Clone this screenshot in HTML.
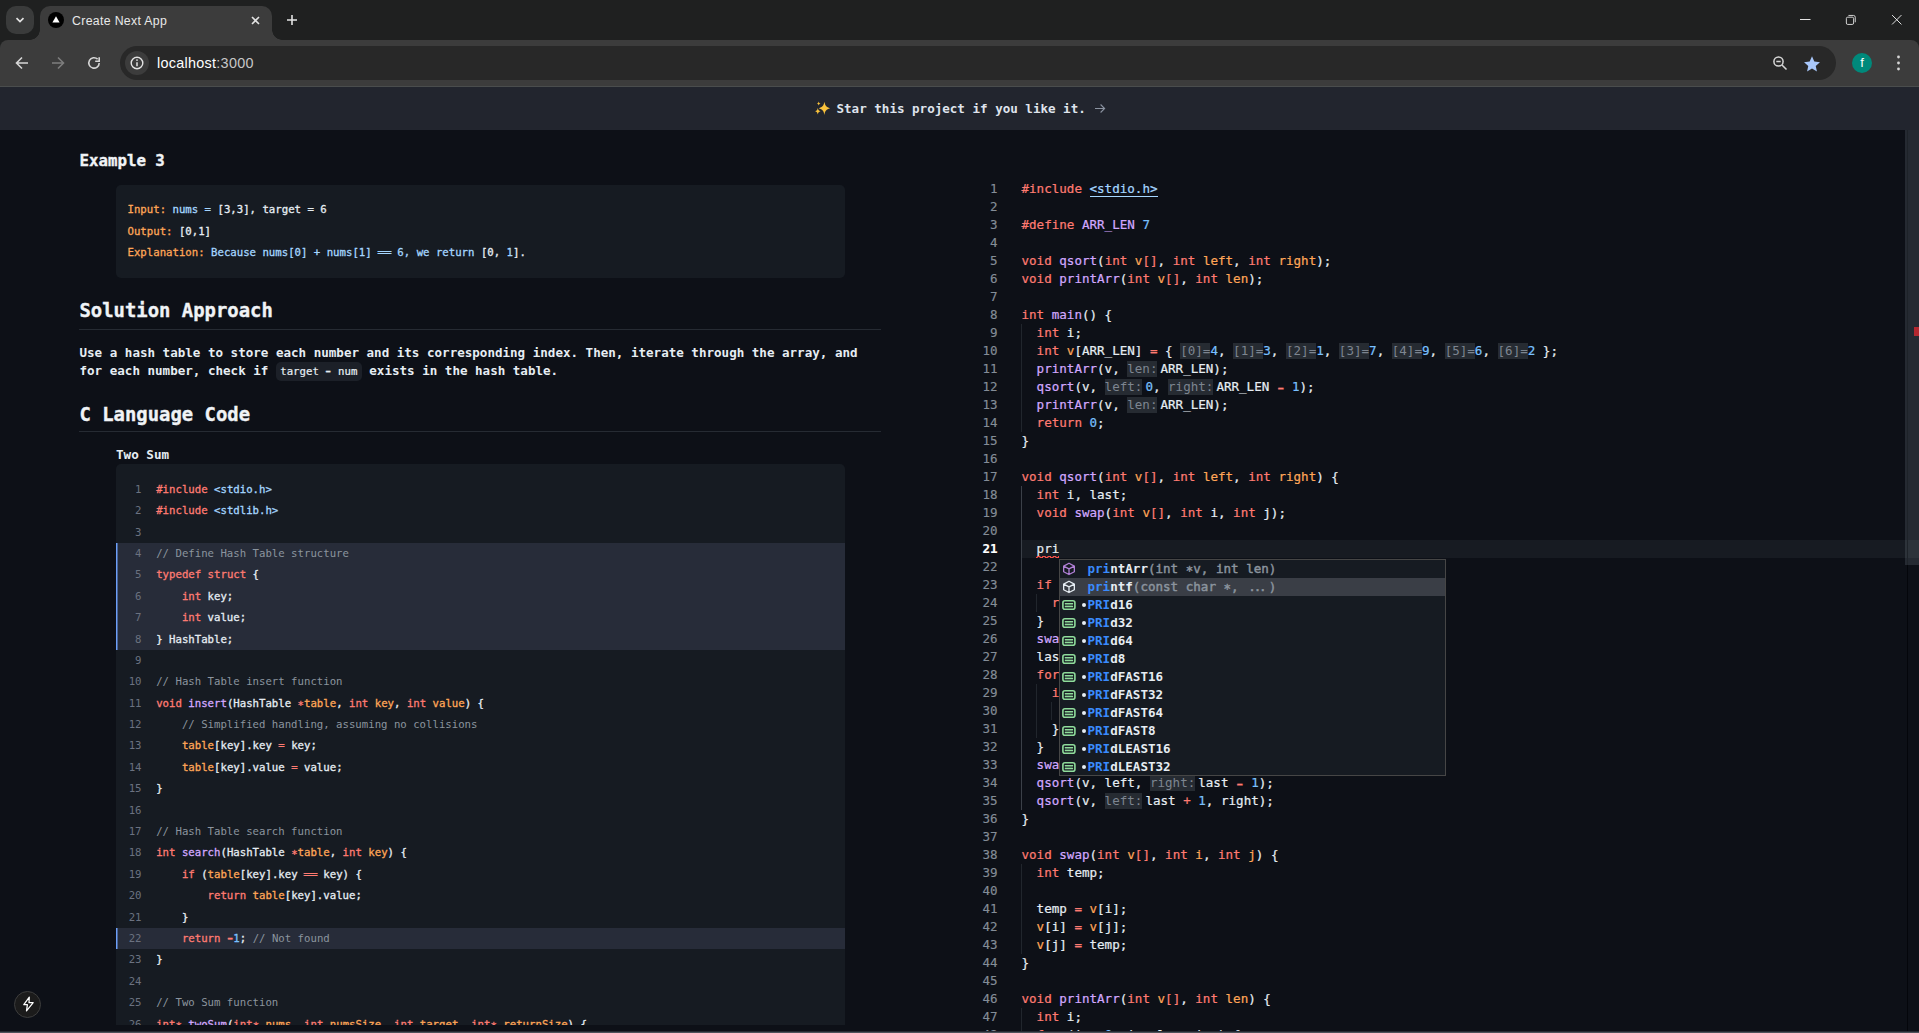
<!DOCTYPE html>
<html lang="en"><head><meta charset="utf-8"><title>Create Next App</title>
<style>
html,body{margin:0;padding:0}
body{width:1919px;height:1033px;overflow:hidden;background:#0d1017;position:relative;font-family:"DejaVu Sans Mono","Liberation Mono",monospace;color:#e6edf3;-webkit-font-smoothing:antialiased}
.a{position:absolute}
#strip{left:0;top:0;width:1919px;height:52px;background:#1f2020}
#tsearch{left:6px;top:6px;width:28px;height:28px;border-radius:10px;background:#3a3b3b}
#tab{left:40px;top:6px;width:232px;height:34px;border-radius:10px 10px 0 0;background:#3c3c3c}
#tab:before,#tab:after{content:"";position:absolute;bottom:0;width:10px;height:10px}
#tab:before{left:-10px;background:radial-gradient(circle at 0 0,transparent 9.5px,#3c3c3c 10px)}
#tab:after{right:-10px;background:radial-gradient(circle at 100% 0,transparent 9.5px,#3c3c3c 10px)}
#toolbar{left:0;top:40px;width:1919px;height:46px;background:#3c3c3c;border-radius:8px 8px 0 0}
#tbline{left:0;top:86px;width:1919px;height:1px;background:#4a4d4d}
#omni{left:120px;top:46px;width:1716px;height:34px;border-radius:17px;background:#282828}
#info{left:125px;top:51px;width:24px;height:24px;border-radius:12px;background:#3c3c3c}
.ui{font-family:"Liberation Sans","DejaVu Sans",sans-serif}
#ttitle{left:72px;top:12.8px;font-size:12.3px;line-height:16px;color:#e8e8e8;white-space:nowrap;letter-spacing:.33px}
#url{left:157px;top:53.8px;font-size:14.4px;line-height:18px;color:#fff;white-space:nowrap;letter-spacing:.28px}
#url span{color:#c7c7c7}
#avatar{left:1852px;top:53px;width:20px;height:20px;border-radius:10px;background:#00897b;color:#fff;font-size:13px;line-height:19px;text-align:center}
#banner{left:0;top:87px;width:1919px;height:43px;background:#22252e}
#btext{left:836.5px;top:100px;font-size:12.56px;line-height:18px;font-weight:bold;color:#dfe3ec;white-space:pre}
#barrow{left:1094px;top:99px;font-size:12.6px;line-height:18px;color:#8b93a1}
h3,h2,p{margin:0;padding:0}
.hd{left:79.5px;font-weight:bold;white-space:nowrap;color:#f0f3f6;-webkit-text-stroke:.35px}
#h_ex{top:150px;font-size:15.75px;line-height:22px}
#h_sol{top:297px;font-size:18.9px;line-height:26px}
#h_c{top:400.5px;font-size:18.9px;line-height:26px}
.hr{left:79px;width:802px;height:1px;background:#262b33}
.blk{left:116px;width:729px;background:#161b22;border-radius:5px}
#ex{top:185px;height:92.5px}
#ex div{position:absolute;left:11.5px;font-size:10.68px;line-height:21.4px;white-space:pre;-webkit-text-stroke:.3px}
.eq{display:inline-block;width:2ch;text-align:center;letter-spacing:-1.200px;transform:scaleX(1.250);text-indent:-1.200px}
.st{position:relative;top:2px}
.mn{display:inline-block;transform:scale(1.600,1.400)}
.o{color:#ffa657}.b{color:#a5d6ff}
#para{left:79.5px;top:343.5px;width:810px;font-size:12.56px;line-height:18px;font-weight:bold;color:#e6edf3;white-space:pre}
#para code{font-family:inherit;font-size:10.7px;font-weight:normal;-webkit-text-stroke:.2px;background:#1c2028;border-radius:5px;padding:2.5px 4.3px 3px;margin:0 0;color:#e6edf3}
#ctitle{left:116px;top:446px;font-size:12.6px;line-height:18px;font-weight:bold;color:#e6edf3}
#code{top:464px;height:560.7px;overflow:hidden;border-radius:5px 5px 0 0}
#code .in{position:absolute;left:0;top:14.8px;width:729px}
.ll{height:21.4px;line-height:21.4px;font-size:10.68px;white-space:pre;position:relative;-webkit-text-stroke:.3px}
.ll.hl{background:#272c39;box-shadow:inset 1.500px 0 0 #6c9ef8}
.ln{position:absolute;left:0;width:25.5px;text-align:right;color:#6b7280;-webkit-text-stroke:0}
.lc{position:absolute;left:40.2px}
.k{color:#ff7b72}.f{color:#d2a8ff}.s{color:#a5d6ff}.n{color:#79c0ff}.v{color:#ffa657}.c{color:#8b949e;-webkit-text-stroke:0}
#bolt{left:14px;top:991px;width:25px;height:25px;border-radius:14px;background:#1b1b1b;border:1px solid #3d3d3d}
#botline{left:0;top:1031px;width:1919px;height:2px;background:linear-gradient(#262b33 0 45%,#4d535b 55% 100%)}
/* monaco */
#ed{left:960px;top:130px;width:959px;height:901px;overflow:hidden}
#ed .in{position:absolute;left:0;top:49.6px;width:959px}
.rl{height:18px;line-height:18px;font-size:12.56px;white-space:pre;position:relative}
.rl.cur:before{content:"";position:absolute;left:61px;right:0;top:0;height:18px;background:#171b22}
.rn{position:absolute;left:0;width:37.5px;text-align:right;color:#848d97;-webkit-text-stroke:.15px}
.rl.cur .rn{color:#fff;font-weight:bold}
.rc{position:absolute;left:61.5px;-webkit-text-stroke:.22px}
.g{position:absolute;top:0;width:1px;height:18px;background:#21262d}.ga{background:#3b4048}
.u{border-bottom:1px solid #a5d6ff;padding-bottom:0}
.h,.hm{color:#7d8590;background:#262b32;padding:0 0 1.600px;-webkit-text-stroke:0}
.hm{margin-right:3px}
.sq{position:relative}.sq:after{content:"";position:absolute;left:-1px;width:23px;top:15.300px;height:2.200px;background:radial-gradient(ellipse 2.600px 2.400px at 50% 100%,transparent 1.100px,#f85149 1.300px,#f85149 2.300px,transparent 2.500px) 0 0/5.300px 2.200px repeat-x}
#sbord{left:1907px;top:130px;width:1px;height:901px;background:#04060b}
#sbord2{display:none}
#sthumb{left:1905px;top:130px;width:14px;height:435px;background:rgba(110,118,129,.26)}
#smark{left:1913.5px;top:327px;width:5.5px;height:9px;background:#b3272f}
#sug{left:1059px;top:559px;width:385px;height:215px;background:#161b22;border:1px solid #464646;overflow:hidden}
.sr{height:18px;line-height:18px;font-size:12.56px;white-space:pre;position:relative}
.sr.sel{background:#3a3e46}
.sr .ic{position:absolute;left:0;top:0}
.sr .dot{position:absolute;left:21.500px;top:6.700px;width:4px;height:4px;border-radius:2px;background:#e6edf3;font-size:0}
.sl{position:absolute;left:27.5px;font-weight:bold;color:#e6edf3}
.sl .m{color:#3a8bfd}
.sd{color:#8b949e;font-weight:normal;-webkit-text-stroke:.45px}
.el{letter-spacing:-2.150px;padding:0 4.300px 0 2.150px}
</style></head>
<body>
<div class="a" id="strip"></div>
<div class="a" id="tsearch"></div>
<div class="a" id="tab"></div>
<div class="a" id="toolbar"></div>
<div class="a" id="tbline"></div>
<div class="a" id="omni"></div>
<div class="a" id="info"></div>

<svg class="a" style="left:14px;top:15px" width="12" height="10" viewBox="0 0 12 10"><path d="M2.5 3.2 6 6.6l3.5-3.4" fill="none" stroke="#e3e3e3" stroke-width="1.7"/></svg>
<svg class="a" style="left:48px;top:12px" width="16" height="16" viewBox="0 0 16 16"><circle cx="8" cy="8" r="8" fill="#000"/><path d="M8 4.3 11.6 10.6H4.4z" fill="#fff"/></svg>
<svg class="a" style="left:250.300px;top:14.800px" width="11" height="11" viewBox="0 0 11 11"><path d="M2 2l7 7M9 2l-7 7" stroke="#e3e3e3" stroke-width="1.6"/></svg>
<svg class="a" style="left:286px;top:14px" width="12" height="12" viewBox="0 0 12 12"><path d="M6 1v10M1 6h10" stroke="#e3e3e3" stroke-width="1.6"/></svg>
<svg class="a" style="left:1799px;top:18px" width="13" height="4" viewBox="0 0 13 4"><path d="M1 1.500h10.5" stroke="#e3e3e3" stroke-width="1"/></svg>
<svg class="a" style="left:1845px;top:14px" width="11.800" height="11.800" viewBox="0 0 13 13"><rect x="1.5" y="3.5" width="8" height="8" rx="1.5" fill="none" stroke="#e3e3e3" stroke-width="1"/><path d="M3.8 1.6h5.5a2 2 0 0 1 2 2v5.5" fill="none" stroke="#e3e3e3" stroke-width="1"/></svg>
<svg class="a" style="left:1891.200px;top:14.200px" width="11.700" height="11.700" viewBox="0 0 13 13"><path d="M1.2 1.2l10.4 10.4M11.6 1.2 1.2 11.6" stroke="#e3e3e3" stroke-width="1.1"/></svg>
<svg class="a" style="left:14px;top:55px" width="16" height="16" viewBox="0 0 16 16"><path d="M14 8H2.8M8 2.5 2.5 8 8 13.5" fill="none" stroke="#d6d6d6" stroke-width="1.6"/></svg>
<svg class="a" style="left:50px;top:55px" width="16" height="16" viewBox="0 0 16 16"><path d="M2 8h11.2M8 2.5 13.5 8 8 13.5" fill="none" stroke="#7d7d7d" stroke-width="1.6"/></svg>
<svg class="a" style="left:86px;top:55px" width="16" height="16" viewBox="0 0 16 16"><path d="M13.2 8A5.2 5.2 0 1 1 11.6 4.2" fill="none" stroke="#d6d6d6" stroke-width="1.6"/><path d="M13.200 2.300v4H9.200" fill="none" stroke="#d6d6d6" stroke-width="1.600"/></svg>
<svg class="a" style="left:129px;top:55px" width="16" height="16" viewBox="0 0 16 16"><circle cx="8" cy="8" r="5.800" fill="none" stroke="#e3e3e3" stroke-width="1.4"/><path d="M8 7.2v4" stroke="#e3e3e3" stroke-width="1.5"/><circle cx="8" cy="5.1" r=".9" fill="#e3e3e3"/></svg>
<svg class="a" style="left:1772px;top:55px" width="16" height="16" viewBox="0 0 16 16"><circle cx="6.5" cy="6.5" r="4.6" fill="none" stroke="#d6d6d6" stroke-width="1.5"/><path d="M10 10l4.5 4.5M4.3 6.5h4.4" stroke="#d6d6d6" stroke-width="1.5"/></svg>
<svg class="a" style="left:1803.300px;top:54.500px" width="18" height="18" viewBox="0 0 24 24"><path d="M12 1.8l3.1 6.9 7.5.8-5.6 5 1.6 7.4L12 18.1l-6.6 3.8L7 14.5l-5.6-5 7.5-.8z" fill="#a8c7fa"/></svg>
<svg class="a" style="left:1896px;top:54px" width="5" height="18" viewBox="0 0 5 18"><circle cx="2.5" cy="3" r="1.4" fill="#d6d6d6"/><circle cx="2.5" cy="9" r="1.4" fill="#d6d6d6"/><circle cx="2.5" cy="15" r="1.4" fill="#d6d6d6"/></svg>

<div class="a ui" id="ttitle">Create Next App</div>
<div class="a ui" id="url">localhost<span>:3000</span></div>
<div class="a ui" id="avatar">f</div>
<div class="a" id="banner"></div>
<svg class="a" style="left:814px;top:100px" width="18" height="16" viewBox="0 0 18 16"><path d="M10.400 1.700c.700 3.900 1.900 5.400 5.700 6.500-3.800 1.100-5 2.600-5.700 6.800-.700-4.200-1.900-5.700-5.700-6.800 3.800-1.100 5-2.600 5.700-6.500z" fill="#f9c23c"/><path d="M4.700 1.600c.300 1.300.700 1.700 1.900 2-1.200.300-1.600.700-1.900 2-.300-1.300-.700-1.700-1.900-2 1.200-.300 1.600-.700 1.900-2zM3.800 8.100c.400 2 1 2.600 2.700 3.200-1.700.600-2.300 1.200-2.700 3.200-.400-2-1-2.600-2.700-3.200 1.700-.600 2.300-1.200 2.700-3.200z" fill="#f9c23c"/></svg>
<div class="a" id="btext">Star this project if you like it.</div>
<svg class="a" style="left:1094px;top:103px" width="12" height="11" viewBox="0 0 12 11"><path d="M1 5.500h9.600M6.600 1.500l4 4-4 4" fill="none" stroke="#8b93a1" stroke-width="1.100"/></svg>

<h3 class="a hd" id="h_ex">Example 3</h3>
<div class="a blk" id="ex">
<div style="top:14px"><span class="o">Input:</span><span class="b"> nums = </span>[3,3], target = 6</div>
<div style="top:35.500px"><span class="o">Output:</span> [0,1]</div>
<div style="top:57px"><span class="o">Explanation:</span><span class="b"> Because nums[0] + nums[1] <span class="eq">==</span> 6, we return </span>[0, <span class="b">1</span>].</div>
</div>
<h2 class="a hd" id="h_sol">Solution Approach</h2>
<div class="a hr" style="top:329px"></div>
<p class="a" id="para">Use a hash table to store each number and its corresponding index. Then, iterate through the array, and
for each number, check if <code>target <span class="mn">-</span> num</code> exists in the hash table.</p>
<h2 class="a hd" id="h_c">C Language Code</h2>
<div class="a hr" style="top:431px"></div>
<div class="a" id="ctitle">Two Sum</div>
<div class="a blk" id="code"><div class="in">
<div class="ll"><span class="ln">1</span><span class="lc"><span class="k">#include</span> <span class="s">&lt;stdio.h&gt;</span></span></div>
<div class="ll"><span class="ln">2</span><span class="lc"><span class="k">#include</span> <span class="s">&lt;stdlib.h&gt;</span></span></div>
<div class="ll"><span class="ln">3</span><span class="lc"></span></div>
<div class="ll hl"><span class="ln">4</span><span class="lc"><span class="c">// Define Hash Table structure</span></span></div>
<div class="ll hl"><span class="ln">5</span><span class="lc"><span class="k">typedef</span> <span class="k">struct</span> {</span></div>
<div class="ll hl"><span class="ln">6</span><span class="lc">    <span class="k">int</span> key;</span></div>
<div class="ll hl"><span class="ln">7</span><span class="lc">    <span class="k">int</span> value;</span></div>
<div class="ll hl"><span class="ln">8</span><span class="lc">} HashTable;</span></div>
<div class="ll"><span class="ln">9</span><span class="lc"></span></div>
<div class="ll"><span class="ln">10</span><span class="lc"><span class="c">// Hash Table insert function</span></span></div>
<div class="ll"><span class="ln">11</span><span class="lc"><span class="k">void</span> <span class="f">insert</span>(HashTable <span class="k st">*</span><span class="v">table</span>, <span class="k">int</span> <span class="v">key</span>, <span class="k">int</span> <span class="v">value</span>) {</span></div>
<div class="ll"><span class="ln">12</span><span class="lc">    <span class="c">// Simplified handling, assuming no collisions</span></span></div>
<div class="ll"><span class="ln">13</span><span class="lc">    <span class="v">table</span>[key].key <span class="k">=</span> key;</span></div>
<div class="ll"><span class="ln">14</span><span class="lc">    <span class="v">table</span>[key].value <span class="k">=</span> value;</span></div>
<div class="ll"><span class="ln">15</span><span class="lc">}</span></div>
<div class="ll"><span class="ln">16</span><span class="lc"></span></div>
<div class="ll"><span class="ln">17</span><span class="lc"><span class="c">// Hash Table search function</span></span></div>
<div class="ll"><span class="ln">18</span><span class="lc"><span class="k">int</span> <span class="f">search</span>(HashTable <span class="k st">*</span><span class="v">table</span>, <span class="k">int</span> <span class="v">key</span>) {</span></div>
<div class="ll"><span class="ln">19</span><span class="lc">    <span class="k">if</span> (<span class="v">table</span>[key].key <span class="k eq">==</span> key) {</span></div>
<div class="ll"><span class="ln">20</span><span class="lc">        <span class="k">return</span> <span class="v">table</span>[key].value;</span></div>
<div class="ll"><span class="ln">21</span><span class="lc">    }</span></div>
<div class="ll hl"><span class="ln">22</span><span class="lc">    <span class="k">return</span> <span class="k mn">-</span><span class="n">1</span>; <span class="c">// Not found</span></span></div>
<div class="ll"><span class="ln">23</span><span class="lc">}</span></div>
<div class="ll"><span class="ln">24</span><span class="lc"></span></div>
<div class="ll"><span class="ln">25</span><span class="lc"><span class="c">// Two Sum function</span></span></div>
<div class="ll"><span class="ln">26</span><span class="lc"><span class="k">int</span><span class="k st">*</span> <span class="f">twoSum</span>(<span class="k">int</span><span class="k st">*</span> <span class="v">nums</span>, <span class="k">int</span> <span class="v">numsSize</span>, <span class="k">int</span> <span class="v">target</span>, <span class="k">int</span><span class="k st">*</span> <span class="v">returnSize</span>) {</span></div>
</div></div>
<div class="a" id="bolt"><svg class="a" style="left:6.700px;top:3.700px" width="13" height="16" viewBox="0 0 13 16"><path d="M7.300 1.200 1.800 8.700h3.600L4.500 14.800 11.200 6.700H7z" fill="none" stroke="#fff" stroke-width="1.250" stroke-linejoin="round"/></svg></div>

<div class="a" id="ed"><div class="in">
<div class="rl"><span class="rn">1</span><span class="rc"><span class="k">#include</span> <span class="s u">&lt;stdio.h&gt;</span></span></div>
<div class="rl"><span class="rn">2</span><span class="rc"></span></div>
<div class="rl"><span class="rn">3</span><span class="rc"><span class="k">#define</span> <span class="f">ARR_LEN</span> <span class="n">7</span></span></div>
<div class="rl"><span class="rn">4</span><span class="rc"></span></div>
<div class="rl"><span class="rn">5</span><span class="rc"><span class="k">void</span> <span class="f">qsort</span>(<span class="k">int</span> <span class="v">v</span><span class="k">[]</span>, <span class="k">int</span> <span class="v">left</span>, <span class="k">int</span> <span class="v">right</span>);</span></div>
<div class="rl"><span class="rn">6</span><span class="rc"><span class="k">void</span> <span class="f">printArr</span>(<span class="k">int</span> <span class="v">v</span><span class="k">[]</span>, <span class="k">int</span> <span class="v">len</span>);</span></div>
<div class="rl"><span class="rn">7</span><span class="rc"></span></div>
<div class="rl"><span class="rn">8</span><span class="rc"><span class="k">int</span> <span class="f">main</span>() {</span></div>
<div class="rl"><span class="rn">9</span><i class="g" style="left:61.00px"></i><span class="rc">  <span class="k">int</span> i;</span></div>
<div class="rl"><span class="rn">10</span><i class="g" style="left:61.00px"></i><span class="rc">  <span class="k">int</span> <span class="v">v</span>[ARR_LEN] <span class="k">=</span> { <span class="h">[0]=</span><span class="n">4</span>, <span class="h">[1]=</span><span class="n">3</span>, <span class="h">[2]=</span><span class="n">1</span>, <span class="h">[3]=</span><span class="n">7</span>, <span class="h">[4]=</span><span class="n">9</span>, <span class="h">[5]=</span><span class="n">6</span>, <span class="h">[6]=</span><span class="n">2</span> };</span></div>
<div class="rl"><span class="rn">11</span><i class="g" style="left:61.00px"></i><span class="rc">  <span class="f">printArr</span>(v, <span class="hm">len:</span>ARR_LEN);</span></div>
<div class="rl"><span class="rn">12</span><i class="g" style="left:61.00px"></i><span class="rc">  <span class="f">qsort</span>(v, <span class="hm">left:</span><span class="n">0</span>, <span class="hm">right:</span>ARR_LEN <span class="k mn">-</span> <span class="n">1</span>);</span></div>
<div class="rl"><span class="rn">13</span><i class="g" style="left:61.00px"></i><span class="rc">  <span class="f">printArr</span>(v, <span class="hm">len:</span>ARR_LEN);</span></div>
<div class="rl"><span class="rn">14</span><i class="g" style="left:61.00px"></i><span class="rc">  <span class="k">return</span> <span class="n">0</span>;</span></div>
<div class="rl"><span class="rn">15</span><span class="rc">}</span></div>
<div class="rl"><span class="rn">16</span><span class="rc"></span></div>
<div class="rl"><span class="rn">17</span><span class="rc"><span class="k">void</span> <span class="f">qsort</span>(<span class="k">int</span> <span class="v">v</span><span class="k">[]</span>, <span class="k">int</span> <span class="v">left</span>, <span class="k">int</span> <span class="v">right</span>) {</span></div>
<div class="rl"><span class="rn">18</span><i class="g ga" style="left:61.00px"></i><span class="rc">  <span class="k">int</span> i, last;</span></div>
<div class="rl"><span class="rn">19</span><i class="g ga" style="left:61.00px"></i><span class="rc">  <span class="k">void</span> <span class="f">swap</span>(<span class="k">int</span> <span class="v">v</span><span class="k">[]</span>, <span class="k">int</span> i, <span class="k">int</span> j);</span></div>
<div class="rl"><span class="rn">20</span><i class="g ga" style="left:61.00px"></i><span class="rc"></span></div>
<div class="rl cur"><span class="rn">21</span><i class="g ga" style="left:61.00px"></i><span class="rc">  <span class="sq">pri</span></span></div>
<div class="rl"><span class="rn">22</span><i class="g ga" style="left:61.00px"></i><span class="rc"></span></div>
<div class="rl"><span class="rn">23</span><i class="g ga" style="left:61.00px"></i><span class="rc">  <span class="k">if</span> (left <span class="k">&gt;=</span> right) {</span></div>
<div class="rl"><span class="rn">24</span><i class="g ga" style="left:61.00px"></i><i class="g" style="left:76.12px"></i><span class="rc">    <span class="k">return</span>;</span></div>
<div class="rl"><span class="rn">25</span><i class="g ga" style="left:61.00px"></i><span class="rc">  }</span></div>
<div class="rl"><span class="rn">26</span><i class="g ga" style="left:61.00px"></i><span class="rc">  <span class="f">swap</span>(v, left, (left <span class="k">+</span> right) <span class="k">/</span> <span class="n">2</span>);</span></div>
<div class="rl"><span class="rn">27</span><i class="g ga" style="left:61.00px"></i><span class="rc">  last <span class="k">=</span> left;</span></div>
<div class="rl"><span class="rn">28</span><i class="g ga" style="left:61.00px"></i><span class="rc">  <span class="k">for</span> (i <span class="k">=</span> left <span class="k">+</span> <span class="n">1</span>; i <span class="k">&lt;=</span> right; i<span class="k">++</span>) {</span></div>
<div class="rl"><span class="rn">29</span><i class="g ga" style="left:61.00px"></i><i class="g" style="left:76.12px"></i><span class="rc">    <span class="k">if</span> (<span class="v">v</span>[i] <span class="k">&lt;</span> <span class="v">v</span>[left]) {</span></div>
<div class="rl"><span class="rn">30</span><i class="g ga" style="left:61.00px"></i><i class="g" style="left:76.12px"></i><i class="g" style="left:91.24px"></i><span class="rc">      <span class="f">swap</span>(v, <span class="k">++</span>last, i);</span></div>
<div class="rl"><span class="rn">31</span><i class="g ga" style="left:61.00px"></i><i class="g" style="left:76.12px"></i><span class="rc">    }</span></div>
<div class="rl"><span class="rn">32</span><i class="g ga" style="left:61.00px"></i><span class="rc">  }</span></div>
<div class="rl"><span class="rn">33</span><i class="g ga" style="left:61.00px"></i><span class="rc">  <span class="f">swap</span>(v, left, last);</span></div>
<div class="rl"><span class="rn">34</span><i class="g ga" style="left:61.00px"></i><span class="rc">  <span class="f">qsort</span>(v, left, <span class="hm">right:</span>last <span class="k mn">-</span> <span class="n">1</span>);</span></div>
<div class="rl"><span class="rn">35</span><i class="g ga" style="left:61.00px"></i><span class="rc">  <span class="f">qsort</span>(v, <span class="hm">left:</span>last <span class="k">+</span> <span class="n">1</span>, right);</span></div>
<div class="rl"><span class="rn">36</span><span class="rc">}</span></div>
<div class="rl"><span class="rn">37</span><span class="rc"></span></div>
<div class="rl"><span class="rn">38</span><span class="rc"><span class="k">void</span> <span class="f">swap</span>(<span class="k">int</span> <span class="v">v</span><span class="k">[]</span>, <span class="k">int</span> <span class="v">i</span>, <span class="k">int</span> <span class="v">j</span>) {</span></div>
<div class="rl"><span class="rn">39</span><i class="g" style="left:61.00px"></i><span class="rc">  <span class="k">int</span> temp;</span></div>
<div class="rl"><span class="rn">40</span><i class="g" style="left:61.00px"></i><span class="rc"></span></div>
<div class="rl"><span class="rn">41</span><i class="g" style="left:61.00px"></i><span class="rc">  temp <span class="k">=</span> <span class="v">v</span>[i];</span></div>
<div class="rl"><span class="rn">42</span><i class="g" style="left:61.00px"></i><span class="rc">  <span class="v">v</span>[i] <span class="k">=</span> <span class="v">v</span>[j];</span></div>
<div class="rl"><span class="rn">43</span><i class="g" style="left:61.00px"></i><span class="rc">  <span class="v">v</span>[j] <span class="k">=</span> temp;</span></div>
<div class="rl"><span class="rn">44</span><span class="rc">}</span></div>
<div class="rl"><span class="rn">45</span><span class="rc"></span></div>
<div class="rl"><span class="rn">46</span><span class="rc"><span class="k">void</span> <span class="f">printArr</span>(<span class="k">int</span> <span class="v">v</span><span class="k">[]</span>, <span class="k">int</span> <span class="v">len</span>) {</span></div>
<div class="rl"><span class="rn">47</span><i class="g" style="left:61.00px"></i><span class="rc">  <span class="k">int</span> i;</span></div>
<div class="rl"><span class="rn">48</span><i class="g" style="left:61.00px"></i><span class="rc">  <span class="k">for</span> (i <span class="k">=</span> <span class="n">0</span>; i <span class="k">&lt;</span> len; i<span class="k">++</span>) {</span></div>
</div></div>
<div class="a" id="sbord"></div><div class="a" id="sbord2"></div><div class="a" id="sthumb"></div><div class="a" id="smark"></div>
<div class="a" id="sug">
<div class="sr"><svg class="ic" viewBox="0 0 18 18" width="18" height="18"><path d="M9 3.250 14.350 6.100v5.600L9 14.550 3.650 11.700V6.100zM3.650 6.100 9 8.900l5.350-2.800M9 8.900v5.650" fill="none" stroke="#b180d7" stroke-width="1.300" stroke-linejoin="round"/></svg><span class="sl"><b class="m">pri</b>ntArr<span class="sd">(int <span class="st">*</span>v, int len)</span></span></div>
<div class="sr sel"><svg class="ic" viewBox="0 0 18 18" width="18" height="18"><path d="M9 3.250 14.350 6.100v5.600L9 14.550 3.650 11.700V6.100zM3.650 6.100 9 8.900l5.350-2.800M9 8.900v5.650" fill="none" stroke="#e6edf3" stroke-width="1.300" stroke-linejoin="round"/></svg><span class="sl"><b class="m">pri</b>ntf<span class="sd">(const char <span class="st">*</span>, <span class="el">...</span>)</span></span></div>
<div class="sr"><svg class="ic" viewBox="0 0 18 18" width="18" height="18"><rect x="2.900" y="4.800" width="12" height="8.400" rx="2" fill="none" stroke="#8fdc9b" stroke-width="1.600"/><rect x="5" y="7.700" width="7.800" height="2.900" fill="rgba(143,220,155,.35)"/><path d="M4.800 7.700h8.300M4.800 10.600h8.300" stroke="#8fdc9b" stroke-width="1.200" fill="none"/></svg><span class="dot">•</span><span class="sl"><b class="m">PRI</b>d16<span class="sd"></span></span></div>
<div class="sr"><svg class="ic" viewBox="0 0 18 18" width="18" height="18"><rect x="2.900" y="4.800" width="12" height="8.400" rx="2" fill="none" stroke="#8fdc9b" stroke-width="1.600"/><rect x="5" y="7.700" width="7.800" height="2.900" fill="rgba(143,220,155,.35)"/><path d="M4.800 7.700h8.300M4.800 10.600h8.300" stroke="#8fdc9b" stroke-width="1.200" fill="none"/></svg><span class="dot">•</span><span class="sl"><b class="m">PRI</b>d32<span class="sd"></span></span></div>
<div class="sr"><svg class="ic" viewBox="0 0 18 18" width="18" height="18"><rect x="2.900" y="4.800" width="12" height="8.400" rx="2" fill="none" stroke="#8fdc9b" stroke-width="1.600"/><rect x="5" y="7.700" width="7.800" height="2.900" fill="rgba(143,220,155,.35)"/><path d="M4.800 7.700h8.300M4.800 10.600h8.300" stroke="#8fdc9b" stroke-width="1.200" fill="none"/></svg><span class="dot">•</span><span class="sl"><b class="m">PRI</b>d64<span class="sd"></span></span></div>
<div class="sr"><svg class="ic" viewBox="0 0 18 18" width="18" height="18"><rect x="2.900" y="4.800" width="12" height="8.400" rx="2" fill="none" stroke="#8fdc9b" stroke-width="1.600"/><rect x="5" y="7.700" width="7.800" height="2.900" fill="rgba(143,220,155,.35)"/><path d="M4.800 7.700h8.300M4.800 10.600h8.300" stroke="#8fdc9b" stroke-width="1.200" fill="none"/></svg><span class="dot">•</span><span class="sl"><b class="m">PRI</b>d8<span class="sd"></span></span></div>
<div class="sr"><svg class="ic" viewBox="0 0 18 18" width="18" height="18"><rect x="2.900" y="4.800" width="12" height="8.400" rx="2" fill="none" stroke="#8fdc9b" stroke-width="1.600"/><rect x="5" y="7.700" width="7.800" height="2.900" fill="rgba(143,220,155,.35)"/><path d="M4.800 7.700h8.300M4.800 10.600h8.300" stroke="#8fdc9b" stroke-width="1.200" fill="none"/></svg><span class="dot">•</span><span class="sl"><b class="m">PRI</b>dFAST16<span class="sd"></span></span></div>
<div class="sr"><svg class="ic" viewBox="0 0 18 18" width="18" height="18"><rect x="2.900" y="4.800" width="12" height="8.400" rx="2" fill="none" stroke="#8fdc9b" stroke-width="1.600"/><rect x="5" y="7.700" width="7.800" height="2.900" fill="rgba(143,220,155,.35)"/><path d="M4.800 7.700h8.300M4.800 10.600h8.300" stroke="#8fdc9b" stroke-width="1.200" fill="none"/></svg><span class="dot">•</span><span class="sl"><b class="m">PRI</b>dFAST32<span class="sd"></span></span></div>
<div class="sr"><svg class="ic" viewBox="0 0 18 18" width="18" height="18"><rect x="2.900" y="4.800" width="12" height="8.400" rx="2" fill="none" stroke="#8fdc9b" stroke-width="1.600"/><rect x="5" y="7.700" width="7.800" height="2.900" fill="rgba(143,220,155,.35)"/><path d="M4.800 7.700h8.300M4.800 10.600h8.300" stroke="#8fdc9b" stroke-width="1.200" fill="none"/></svg><span class="dot">•</span><span class="sl"><b class="m">PRI</b>dFAST64<span class="sd"></span></span></div>
<div class="sr"><svg class="ic" viewBox="0 0 18 18" width="18" height="18"><rect x="2.900" y="4.800" width="12" height="8.400" rx="2" fill="none" stroke="#8fdc9b" stroke-width="1.600"/><rect x="5" y="7.700" width="7.800" height="2.900" fill="rgba(143,220,155,.35)"/><path d="M4.800 7.700h8.300M4.800 10.600h8.300" stroke="#8fdc9b" stroke-width="1.200" fill="none"/></svg><span class="dot">•</span><span class="sl"><b class="m">PRI</b>dFAST8<span class="sd"></span></span></div>
<div class="sr"><svg class="ic" viewBox="0 0 18 18" width="18" height="18"><rect x="2.900" y="4.800" width="12" height="8.400" rx="2" fill="none" stroke="#8fdc9b" stroke-width="1.600"/><rect x="5" y="7.700" width="7.800" height="2.900" fill="rgba(143,220,155,.35)"/><path d="M4.800 7.700h8.300M4.800 10.600h8.300" stroke="#8fdc9b" stroke-width="1.200" fill="none"/></svg><span class="dot">•</span><span class="sl"><b class="m">PRI</b>dLEAST16<span class="sd"></span></span></div>
<div class="sr"><svg class="ic" viewBox="0 0 18 18" width="18" height="18"><rect x="2.900" y="4.800" width="12" height="8.400" rx="2" fill="none" stroke="#8fdc9b" stroke-width="1.600"/><rect x="5" y="7.700" width="7.800" height="2.900" fill="rgba(143,220,155,.35)"/><path d="M4.800 7.700h8.300M4.800 10.600h8.300" stroke="#8fdc9b" stroke-width="1.200" fill="none"/></svg><span class="dot">•</span><span class="sl"><b class="m">PRI</b>dLEAST32<span class="sd"></span></span></div>
</div>
<div class="a" id="botline"></div>
</body></html>
